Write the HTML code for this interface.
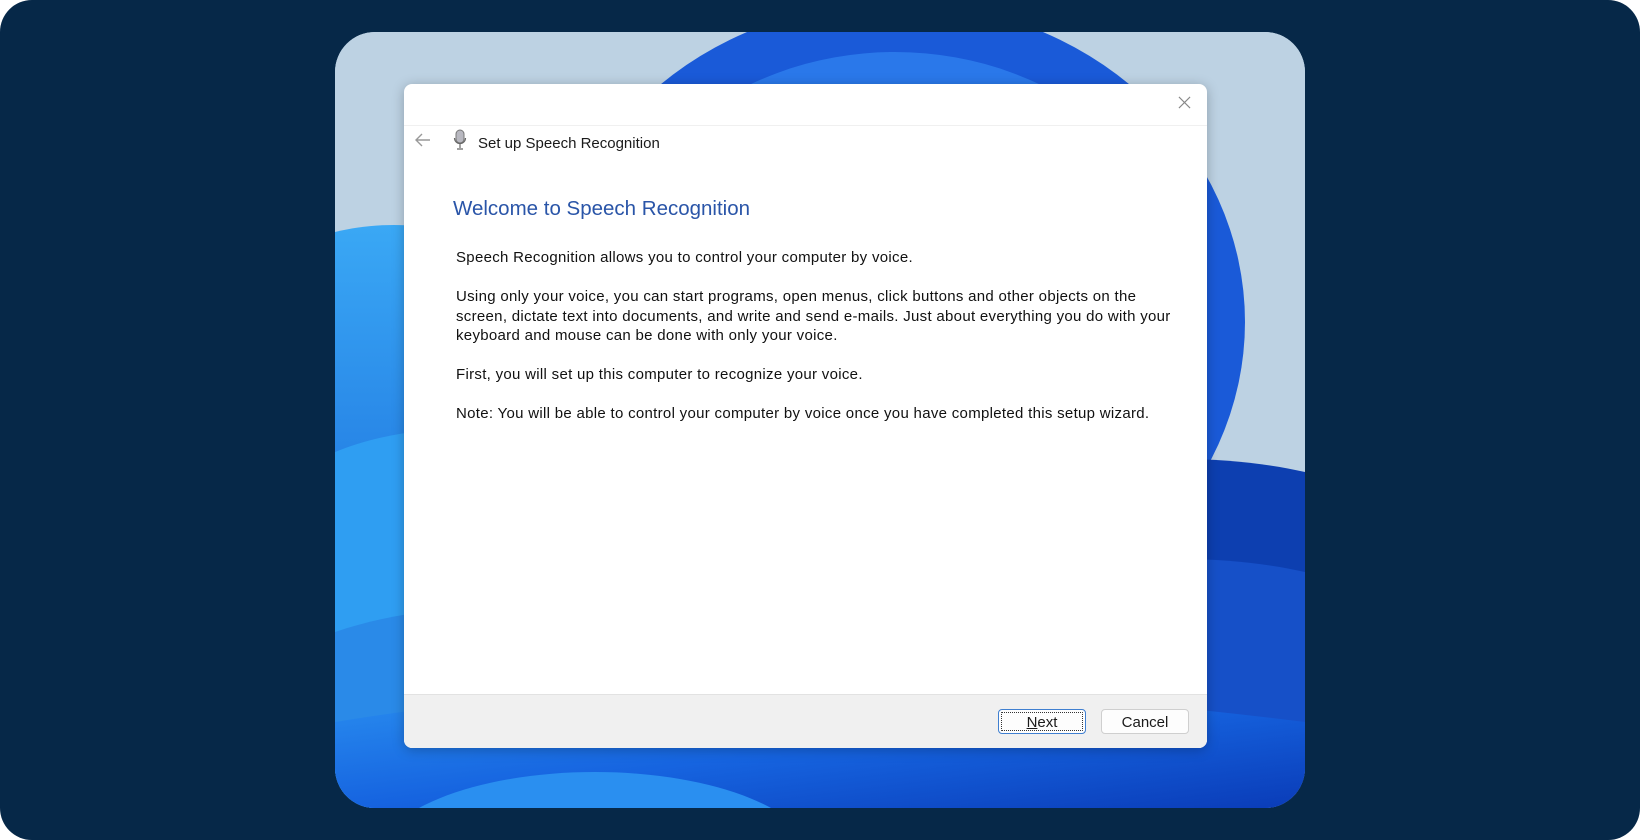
<!DOCTYPE html>
<html style="overflow:hidden"><head><meta charset="utf-8"><style>
html,body{margin:0;padding:0;background:#fff;overflow:hidden}
body{width:1640px;height:840px;position:relative;overflow:hidden;font-family:"Liberation Sans",sans-serif}
.outer{position:absolute;left:0;top:0;width:1640px;height:840px;background:#062848;border-radius:32px}
.panel{position:absolute;left:335px;top:32px;width:970px;height:776px;border-radius:40px;overflow:hidden;background:#bfd3e3}
.panel svg{position:absolute;left:0;top:0}
.dlg{position:absolute;left:404px;top:84px;width:803px;height:664px;background:#fff;border-radius:8px;box-shadow:0 2px 12px rgba(0,0,0,.25);overflow:hidden}
.sep{position:absolute;left:0;top:41px;width:100%;height:1px;background:#f0f0f0}
.title{position:absolute;left:74px;top:51px;font-size:15px;color:#1a1a1a}
.h1{position:absolute;left:49px;top:113px;font-size:20.5px;color:#2a55a8}
.body{position:absolute;left:52px;top:164px;font-size:15px;letter-spacing:0.3px;color:#111;line-height:19.5px;white-space:nowrap}
.body p{margin:0 0 19.5px 0}
.foot{position:absolute;left:0;top:610px;width:100%;height:54px;background:#f0f0f0;border-top:1px solid #e2e2e2}
.btn{position:absolute;top:14px;width:88px;height:25px;border:1px solid #cfcfcf;border-radius:4px;background:#fdfdfd;font-size:15px;text-align:center;line-height:25px;color:#1a1a1a;box-sizing:border-box}
.next{left:594px;border:1px solid #3f7fd0;outline:1px dotted #333;outline-offset:-4px}
.cancel{left:697px}
</style></head><body>
<div class="outer"></div>
<div class="panel">
<svg width="970" height="776" viewBox="0 0 970 776">
<defs>
<linearGradient id="g1" x1="0" y1="0" x2="1" y2="1"><stop offset="0" stop-color="#2a8ff0"/><stop offset="0.5" stop-color="#1664e0"/><stop offset="1" stop-color="#0a3cb8"/></linearGradient>
<linearGradient id="g2" x1="0" y1="0" x2="0" y2="1"><stop offset="0" stop-color="#3aa8f5"/><stop offset="1" stop-color="#0b50d0"/></linearGradient>
</defs>
<rect width="970" height="776" fill="#bdd2e3"/>
<ellipse cx="560" cy="290" rx="350" ry="320" fill="#1a5ad8"/>
<ellipse cx="560" cy="300" rx="310" ry="280" fill="#2a78ea"/>
<ellipse cx="540" cy="330" rx="270" ry="260" fill="#1d62dc"/>
<path d="M0 200 C120 170 260 240 330 330 L330 776 L0 776 Z" fill="url(#g2)"/>
<path d="M0 420 C100 380 200 400 320 420 L320 776 L0 776 Z" fill="#2f9ef2"/>
<path d="M0 600 C120 560 220 580 320 600 L320 776 L0 776Z" fill="#2a8ae8"/>
<path d="M600 460 C760 420 880 420 970 440 L970 776 L600 776Z" fill="#0d3fb0"/>
<path d="M600 560 C760 520 880 520 970 540 L970 776 L600 776Z" fill="#1650c8"/>
<path d="M0 690 C300 640 650 650 970 690 L970 776 L0 776Z" fill="url(#g1)"/>
<ellipse cx="260" cy="830" rx="220" ry="90" fill="#2a8ff0"/>
</svg>
</div>
<div class="dlg">
<svg style="position:absolute;left:774px;top:12px" width="13" height="13" viewBox="0 0 14 14"><path d="M1 1L13 13M13 1L1 13" stroke="#888" stroke-width="1.2"/></svg>
<div class="sep"></div>
<svg style="position:absolute;left:9px;top:46px" width="20" height="20" viewBox="0 0 20 20"><path d="M17 10H3M9 4L3 10L9 16" stroke="#999" stroke-width="1.4" fill="none"/></svg>
<svg style="position:absolute;left:49px;top:45px" width="14" height="22" viewBox="0 0 14 22"><rect x="3" y="1" width="8" height="13" rx="4" fill="#b8b8c0" stroke="#777" stroke-width="1"/><path d="M1.5 9a5.5 5.5 0 0 0 11 0M7 15v4M4 20h6" stroke="#666" stroke-width="1.2" fill="none"/></svg>
<div class="title">Set up Speech Recognition</div>
<div class="h1">Welcome to Speech Recognition</div>
<div class="body">
<p>Speech Recognition allows you to control your computer by voice.</p>
<p>Using only your voice, you can start programs, open menus, click buttons and other objects on the<br>screen, dictate text into documents, and write and send e-mails. Just about everything you do with your<br>keyboard and mouse can be done with only your voice.</p>
<p>First, you will set up this computer to recognize your voice.</p>
<p>Note: You will be able to control your computer by voice once you have completed this setup wizard.</p>
</div>
<div class="foot">
<div class="btn next"><u>N</u>ext</div>
<div class="btn cancel">Cancel</div>
</div>
</div>
</body></html>
